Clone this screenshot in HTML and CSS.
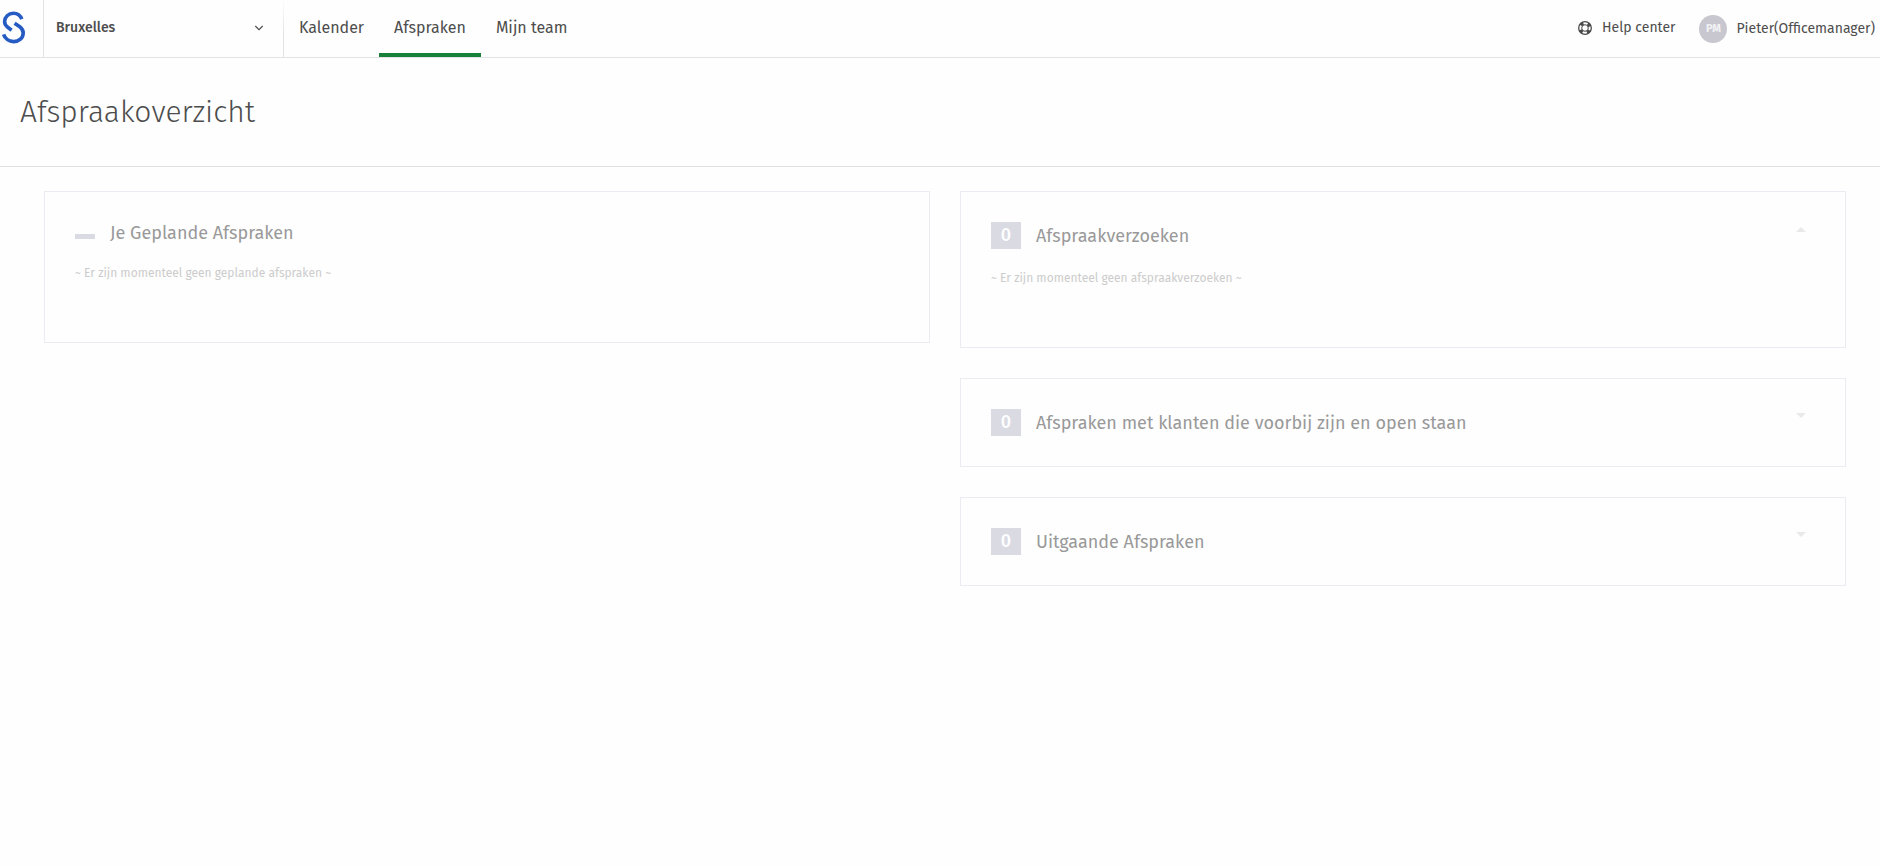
FILE: index.html
```html
<!DOCTYPE html>
<html lang="nl">
<head>
<meta charset="utf-8">
<meta name="viewport" content="width=device-width, initial-scale=1">
<title>Afspraakoverzicht</title>
<link rel="stylesheet" href="styles.css">
</head>
<body>
<header class="topbar">
  <a class="logo" href="#" aria-label="Home">
    <svg width="28" height="36" viewBox="0 0 28 36" fill="none" stroke="#265bc4" stroke-width="3.6">
      <path d="M21.8 10.2C20.4 6.4 17 4.2 13.4 4.2C8.4 4.2 4.6 8 4.6 12.6C4.6 15 5.6 16.6 7.4 18L11.6 21.2"/>
      <path d="M14.6 14.2L19.8 17.8C22.2 19.6 23.2 21.6 23.2 24C23.2 29 19 32.6 13.6 32.6C9 32.6 5 29.8 3.6 25.4"/>
    </svg>
  </a>
  <button class="office" type="button">
    <span>Bruxelles</span>
    <svg width="10" height="6" viewBox="0 0 10 6" fill="none" stroke="#4d4d4d" stroke-width="1.2"><path d="M1.3 1L5 4.6L8.7 1"/></svg>
  </button>
  <nav class="nav">
    <a class="nav-link" href="#">Kalender</a>
    <a class="nav-link active" href="#" aria-current="page">Afspraken</a>
    <a class="nav-link" href="#">Mijn team</a>
  </nav>
  <div class="account">
    <a class="help" href="#">
      <svg width="14" height="14" viewBox="0 0 14 14" fill="none" stroke="#4a4a4a">
        <circle cx="7" cy="7" r="6.3" stroke-width="1.3"/>
        <circle cx="7" cy="7" r="3.3"/>
        <circle cx="7" cy="7" r="4.9" stroke-width="3.4" stroke-dasharray="3.2 4.497" stroke-dashoffset="-2.25"/>
      </svg>
      <span>Help center</span>
    </a>
    <button class="user" type="button">
      <span class="avatar">PM</span>
      <span>Pieter(Officemanager)</span>
    </button>
  </div>
</header>
<div class="page-head">
  <h1 class="page-title">Afspraakoverzicht</h1>
</div>
<main class="board">
  <div class="column">
    <section class="card">
      <div class="card-head">
        <span class="dash"></span>
        <h2 class="card-title">Je Geplande Afspraken</h2>
      </div>
      <p class="empty">~ Er zijn momenteel geen geplande afspraken ~</p>
    </section>
  </div>
  <div class="column">
    <section class="card">
      <div class="card-head">
        <span class="count">0</span>
        <h2 class="card-title">Afspraakverzoeken</h2>
        <button class="toggle" type="button" aria-label="Inklappen" aria-expanded="true">
          <svg width="10" height="5" viewBox="0 0 10 5"><path d="M0 5L5 0L10 5Z" fill="#e9e9ec"/></svg>
        </button>
      </div>
      <p class="empty">~ Er zijn momenteel geen afspraakverzoeken ~</p>
    </section>
    <section class="card">
      <div class="card-head">
        <span class="count">0</span>
        <h2 class="card-title">Afspraken met klanten die voorbij zijn en open staan</h2>
        <button class="toggle closed" type="button" aria-label="Uitklappen" aria-expanded="false">
          <svg width="10" height="5" viewBox="0 0 10 5"><path d="M0 0L5 5L10 0Z" fill="#e9e9ec"/></svg>
        </button>
      </div>
    </section>
    <section class="card">
      <div class="card-head">
        <span class="count">0</span>
        <h2 class="card-title">Uitgaande Afspraken</h2>
        <button class="toggle closed" type="button" aria-label="Uitklappen" aria-expanded="false">
          <svg width="10" height="5" viewBox="0 0 10 5"><path d="M0 0L5 5L10 0Z" fill="#e9e9ec"/></svg>
        </button>
      </div>
    </section>
  </div>
</main>
</body>
</html>
```

FILE: styles.css
```css
* {
  box-sizing: border-box;
}

body {
  margin: 0;
  background: #fefefe;
  color: #4d4d4d;
  font-family: "Fira Sans", "Noto Sans", "Open Sans", sans-serif;
  font-size: 14px;
}

h1,
h2,
p {
  margin: 0;
}

a {
  color: inherit;
  text-decoration: none;
}

button {
  margin: 0;
  padding: 0;
  border: 0;
  background: none;
  color: inherit;
  font: inherit;
  cursor: pointer;
}

svg {
  display: block;
  flex: none;
}

.topbar {
  display: flex;
  min-height: 58px;
  border-bottom: 1px solid #e3e3e5;
}

.logo {
  display: flex;
  align-items: center;
  width: 44px;
  padding-bottom: 4px;
  border-right: 1px solid #e3e3e5;
}

.office {
  display: flex;
  align-items: center;
  justify-content: space-between;
  width: 240px;
  padding: 0 19px 2px 12px;
  border-right: 1px solid;
  border-image: linear-gradient(#fefefe, #e3e3e5 60%) 1;
  font-weight: 500;
}

.nav {
  display: flex;
}

.nav-link {
  display: flex;
  align-items: center;
  padding: 2px 15px 0;
  border-bottom: 4px solid transparent;
  font-size: 16px;
}

.nav-link.active {
  border-color: #188038;
}

.account {
  display: flex;
  align-items: center;
  gap: 24px;
  margin-left: auto;
  padding-right: 5px;
}

.help {
  display: flex;
  align-items: center;
  gap: 10px;
  padding-bottom: 2px;
}

.user {
  display: flex;
  align-items: center;
  gap: 9px;
}

.avatar {
  display: flex;
  align-items: center;
  justify-content: center;
  width: 28px;
  height: 28px;
  border-radius: 50%;
  background: #c8c7cf;
  color: #f2f2f5;
  font-size: 11px;
  font-weight: 700;
}

.page-head {
  padding: 34px 20px;
  border-bottom: 1px solid #e0e0e5;
}

.page-title {
  font-size: 30px;
  font-weight: 300;
  line-height: 40px;
}

.board {
  display: grid;
  grid-template-columns: 1fr 1fr;
  align-items: start;
  gap: 30px;
  padding: 24px 34px 30px 44px;
}

.column {
  display: grid;
  gap: 30px;
}

.card {
  padding: 30px;
  border: 1px solid #ebebf1;
  background: #fefefe;
}

.card-head {
  display: flex;
  align-items: center;
  gap: 15px;
}

.card-title {
  color: #999;
  font-size: 18px;
  font-weight: 400;
  line-height: 22px;
}

.dash {
  width: 20px;
  height: 5px;
  margin-top: 7px;
  background: #dadae3;
}

.count {
  width: 30px;
  background: #dadae3;
  color: #fefefe;
  font-size: 18px;
  font-weight: 500;
  line-height: 27px;
  text-align: center;
}

.toggle {
  align-self: flex-start;
  margin-left: auto;
  padding: 5px 9px;
}

.toggle.closed {
  padding-top: 4px;
}

.empty {
  margin: 19px 0 29px;
  color: #ccc;
  font-size: 12px;
  line-height: 20px;
}
```
